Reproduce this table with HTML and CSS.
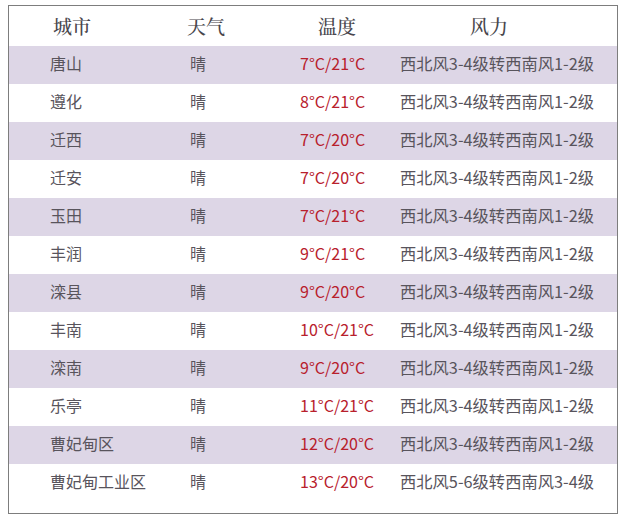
FILE: index.html
```html
<!DOCTYPE html>
<html lang="zh-CN">
<head>
<meta charset="utf-8">
<title>天气</title>
<link rel="stylesheet" href="styles.css">
</head>
<body>
<div class="table">
  <div class="row head">
    <div class="c1">城市</div><div class="c2">天气</div><div class="c3">温度</div><div class="c4">风力</div>
  </div>
  <div class="row alt"><div class="c1">唐山</div><div class="c2">晴</div><div class="c3 temp">7°C/21°C</div><div class="c4">西北风3-4级转西南风1-2级</div></div>
  <div class="row"><div class="c1">遵化</div><div class="c2">晴</div><div class="c3 temp">8°C/21°C</div><div class="c4">西北风3-4级转西南风1-2级</div></div>
  <div class="row alt"><div class="c1">迁西</div><div class="c2">晴</div><div class="c3 temp">7°C/20°C</div><div class="c4">西北风3-4级转西南风1-2级</div></div>
  <div class="row"><div class="c1">迁安</div><div class="c2">晴</div><div class="c3 temp">7°C/20°C</div><div class="c4">西北风3-4级转西南风1-2级</div></div>
  <div class="row alt"><div class="c1">玉田</div><div class="c2">晴</div><div class="c3 temp">7°C/21°C</div><div class="c4">西北风3-4级转西南风1-2级</div></div>
  <div class="row"><div class="c1">丰润</div><div class="c2">晴</div><div class="c3 temp">9°C/21°C</div><div class="c4">西北风3-4级转西南风1-2级</div></div>
  <div class="row alt"><div class="c1">滦县</div><div class="c2">晴</div><div class="c3 temp">9°C/20°C</div><div class="c4">西北风3-4级转西南风1-2级</div></div>
  <div class="row"><div class="c1">丰南</div><div class="c2">晴</div><div class="c3 temp">10°C/21°C</div><div class="c4">西北风3-4级转西南风1-2级</div></div>
  <div class="row alt"><div class="c1">滦南</div><div class="c2">晴</div><div class="c3 temp">9°C/20°C</div><div class="c4">西北风3-4级转西南风1-2级</div></div>
  <div class="row"><div class="c1">乐亭</div><div class="c2">晴</div><div class="c3 temp">11°C/21°C</div><div class="c4">西北风3-4级转西南风1-2级</div></div>
  <div class="row alt"><div class="c1">曹妃甸区</div><div class="c2">晴</div><div class="c3 temp">12°C/20°C</div><div class="c4">西北风3-4级转西南风1-2级</div></div>
  <div class="row"><div class="c1">曹妃甸工业区</div><div class="c2">晴</div><div class="c3 temp">13°C/20°C</div><div class="c4">西北风5-6级转西南风3-4级</div></div>
</div>
</body>
</html>
```

FILE: styles.css
```css
html, body {
  margin: 0;
  padding: 0;
  background: #ffffff;
}
body {
  padding: 5px 0 0 8px;
  font-family: "Noto Sans CJK SC", "Noto Sans", sans-serif;
  color: #58545c;
}
.table {
  width: 608px;
  height: 507px;
  border: 1px solid #7d7d7d;
  background: #ffffff;
  box-sizing: content-box;
}
.row {
  display: grid;
  grid-template-columns: 141px 140px 100px 1fr;
  height: 38px;
  box-sizing: border-box;
  padding-bottom: 4px;
  align-items: center;
  font-size: 16px;
  line-height: 20px;
}
.row > div {
  white-space: nowrap;
}
.alt {
  background: #ddd6e6;
}
.c1 { padding-left: 41px; }
.c2 { padding-left: 40px; }
.c3 { padding-left: 10px; }
.c4 { padding-left: 10px; font-size: 16.3px; }
.temp {
  color: #b8202c;
  font-size: 16px;
}
.head {
  height: 40px;
  padding-bottom: 0;
  font-family: "Noto Serif CJK SC", "Noto Sans CJK SC", serif;
  font-size: 19px;
  font-weight: 500;
  color: #48464c;
}
.head .c1 { padding-left: 44px; }
.head .c2 { padding-left: 37px; }
.head .c3 { padding-left: 28px; }
.head .c4 { padding-left: 80px; font-size: 19px; }
```
